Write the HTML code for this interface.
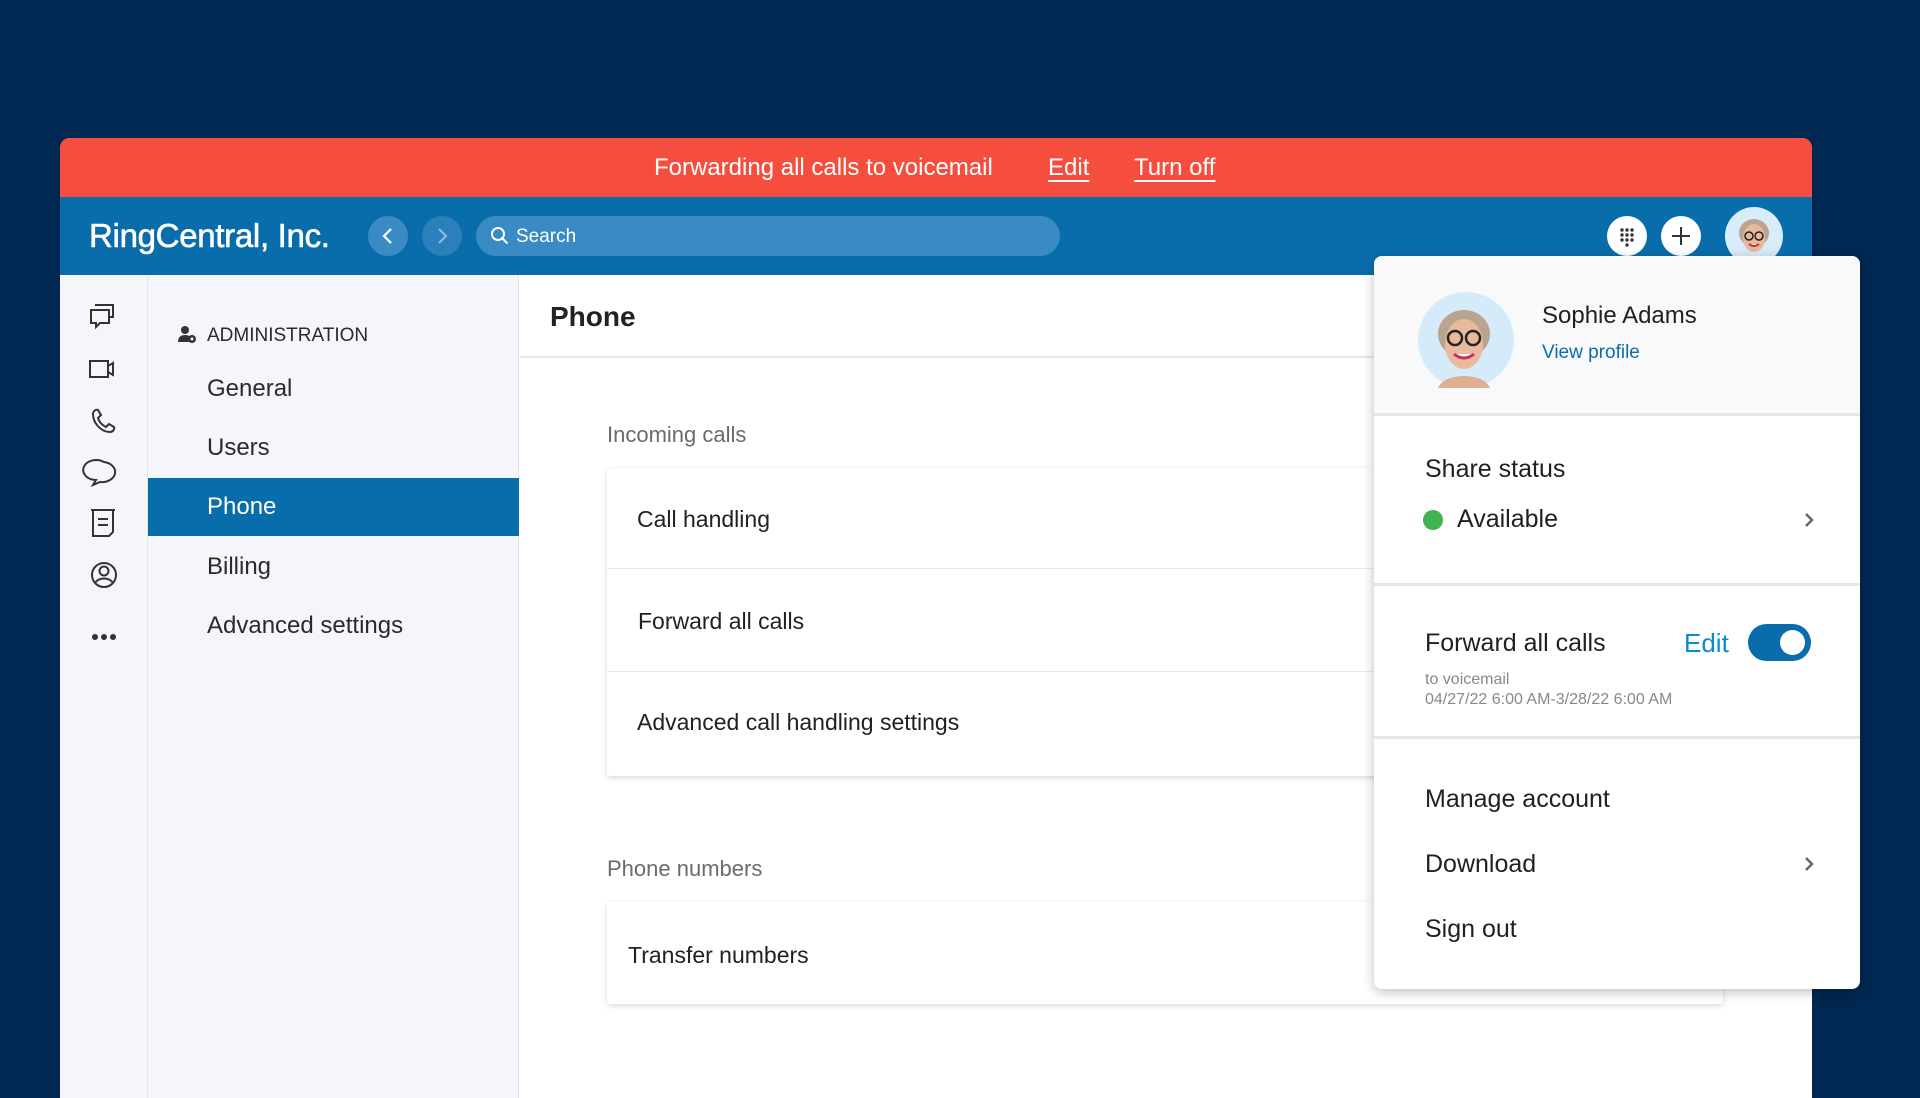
<!DOCTYPE html>
<html><head><meta charset="utf-8"><style>
*{margin:0;padding:0;box-sizing:border-box}
body{width:1920px;height:1080px;background:#012852;font-family:"Liberation Sans",sans-serif;position:relative;overflow:hidden;color:#202124}
.a{position:absolute}
.win{left:60px;top:138px;width:1752px;height:960px;background:#fff;border-radius:10px 10px 0 0;overflow:hidden}
.red{left:0;top:0;width:100%;height:59px;background:#f54e3f;color:#fff;font-size:24px}
.red span{position:absolute;top:16px}
.hdr{left:0;top:59px;width:100%;height:78px;background:#0a6dab}
.circ{border-radius:50%}
.t{white-space:nowrap;line-height:1}
.nav .t{font-size:24px;color:#2a2a2a;left:59px}
.card{background:#fff;box-shadow:0 2px 6px rgba(0,0,0,.15);border-radius:3px}
.dd{left:1374px;top:256px;width:486px;height:733px;background:#fff;border-radius:8px;box-shadow:0 3px 12px rgba(0,0,0,.25);overflow:hidden}
.hl{height:3px;background:#e6e6e6;left:0;width:100%}
</style></head><body>
<div class="a win">
  <div class="a red">
    <span style="left:594px">Forwarding all calls to voicemail</span>
    <span style="left:988px;text-decoration:underline;text-underline-offset:5px">Edit</span>
    <span style="left:1074px;text-decoration:underline;text-underline-offset:5px">Turn off</span>
  </div>
  <div class="a hdr">
    <div class="a t" style="left:29px;top:22px;color:#fff;font-size:33px;letter-spacing:-0.3px;-webkit-text-stroke:0.6px #fff">RingCentral, Inc.</div>
    <div class="a circ" style="left:308px;top:19px;width:40px;height:40px;background:#3a8bc4"><svg width="40" height="40"><path d="M23 13l-7 7 7 7" stroke="#fff" stroke-width="2.2" fill="none"/></svg></div>
    <div class="a circ" style="left:362px;top:19px;width:40px;height:40px;background:#2b7fba"><svg width="40" height="40"><path d="M17 13l7 7-7 7" stroke="#8fbde0" stroke-width="2" fill="none"/></svg></div>
    <div class="a" style="left:416px;top:19px;width:584px;height:40px;border-radius:20px;background:#3a8bc4">
      <svg class="a" style="left:14px;top:10px" width="20" height="20"><circle cx="8" cy="8" r="6" stroke="#fff" stroke-width="2" fill="none"/><path d="M12.5 12.5l5 5" stroke="#fff" stroke-width="2"/></svg>
      <div class="a t" style="left:40px;top:11px;color:#fff;font-size:19px">Search</div>
    </div>
    <div class="a circ" style="left:1547px;top:19px;width:40px;height:40px;background:#fff"><svg width="40" height="40" fill="#333"><circle cx="15" cy="14" r="1.7"/><circle cx="20" cy="14" r="1.7"/><circle cx="25" cy="14" r="1.7"/><circle cx="15" cy="19" r="1.7"/><circle cx="20" cy="19" r="1.7"/><circle cx="25" cy="19" r="1.7"/><circle cx="15" cy="24" r="1.7"/><circle cx="20" cy="24" r="1.7"/><circle cx="25" cy="24" r="1.7"/><circle cx="20" cy="29" r="1.7"/></svg></div>
    <div class="a circ" style="left:1601px;top:19px;width:40px;height:40px;background:#fff"><svg width="40" height="40"><path d="M20 11v18M11 20h18" stroke="#333" stroke-width="2"/></svg></div>
    <svg class="a" style="left:1664px;top:9px" width="60" height="60"><circle cx="30" cy="30" r="29" fill="#d9ecfa"/><ellipse cx="30" cy="27" rx="15" ry="14" fill="#b9a58f"/><ellipse cx="30" cy="32" rx="11" ry="14" fill="#e8b89a"/><path d="M14 60c4-10 28-10 32 0" fill="#e8b89a"/><circle cx="25" cy="30" r="4" fill="none" stroke="#222" stroke-width="1.5"/><circle cx="35" cy="30" r="4" fill="none" stroke="#222" stroke-width="1.5"/><path d="M25 38q5 4 10 0" stroke="#c03050" stroke-width="2" fill="#fff"/></svg>
  </div>
  <!-- rail -->
  <div class="a" style="left:0;top:137px;width:88px;height:830px;background:#f4f6fa;border-right:1px solid #e2e4e8">
    <svg width="88" height="560" fill="none" stroke="#333" stroke-width="2">
      <path d="M35 30h18v12h-3M31 35h18v13h-9l-4 4v-4h-5z"/>
      <rect x="30" y="86" width="18" height="16"/><path d="M48 91l5-3v12l-5-3"/>
      <path d="M33 139c0-3 3-5 5-4l3 5-3 3c1 4 4 7 8 9l3-3 5 3c1 2-1 5-4 5-9 0-17-9-17-18z"/>
      <path d="M44 187a13 10 0 1 0-8 18l-3 5 7-3a13 10 0 0 0 4-20z"/>
      <path d="M31 235h24M33 235v26h16l4-4v-22M38 244h10M38 250h10"/>
      <circle cx="44" cy="300" r="12"/><circle cx="44" cy="296" r="4.5"/><path d="M35 308c4-6 14-6 18 0"/>
    </svg>
    <svg class="a" style="left:31px;top:358px" width="26" height="8" fill="#333"><circle cx="4" cy="4" r="3"/><circle cx="13" cy="4" r="3"/><circle cx="22" cy="4" r="3"/></svg>
  </div>
  <!-- nav -->
  <div class="a nav" style="left:88px;top:137px;width:371px;height:830px;background:#f4f6fb;border-right:1px solid #e2e4e8">
    <svg class="a" style="left:30px;top:50px" width="20" height="20" fill="#333"><circle cx="7" cy="5" r="4"/><path d="M0 17c0-5 3-7 7-7 3 0 5 1 6 3v4z"/><circle cx="14" cy="14" r="4"/><circle cx="14" cy="14" r="1.5" fill="#f4f6fb"/></svg>
    <div class="a t" style="left:59px;top:51px;font-size:19px;color:#2a2a2a">ADMINISTRATION</div>
    <div class="a t" style="top:102px">General</div>
    <div class="a t" style="top:161px">Users</div>
    <div class="a" style="left:0;top:203px;width:371px;height:58px;background:#0a6dab"></div>
    <div class="a t" style="top:220px;color:#fff">Phone</div>
    <div class="a t" style="top:280px">Billing</div>
    <div class="a t" style="top:339px">Advanced settings</div>
  </div>
  <!-- main -->
  <div class="a t" style="left:490px;top:165px;font-size:28px;font-weight:bold;color:#222">Phone</div>
  <div class="a" style="left:460px;top:218px;width:1300px;height:2px;background:#e8e8e8"></div>
  <div class="a t" style="left:547px;top:286px;font-size:22px;color:#6b6b6b">Incoming calls</div>
  <div class="a card" style="left:547px;top:330px;width:1116px;height:308px">
    <div class="a t" style="left:30px;top:40px;font-size:23px">Call handling</div>
    <div class="a" style="left:0;top:100px;width:100%;height:1px;background:#e8e8e8"></div>
    <div class="a t" style="left:31px;top:142px;font-size:23px">Forward all calls</div>
    <div class="a" style="left:0;top:203px;width:100%;height:1px;background:#e8e8e8"></div>
    <div class="a t" style="left:30px;top:243px;font-size:23px">Advanced call handling settings</div>
  </div>
  <div class="a t" style="left:547px;top:720px;font-size:22px;color:#6b6b6b">Phone numbers</div>
  <div class="a card" style="left:547px;top:764px;width:1116px;height:102px">
    <div class="a t" style="left:21px;top:42px;font-size:23px">Transfer numbers</div>
  </div>
</div>
<!-- dropdown -->
<div class="a dd">
  <div class="a" style="left:0;top:0;width:100%;height:157px;background:#f9f9f9"></div>
  <svg class="a" style="left:44px;top:36px" width="96" height="96"><circle cx="48" cy="48" r="48" fill="#d6ebfa"/><ellipse cx="46" cy="42" rx="26" ry="24" fill="#b9a58f"/><ellipse cx="46" cy="52" rx="19" ry="25" fill="#e9b99b"/><path d="M20 96c6-16 46-16 52 0" fill="#e0ae90"/><circle cx="37" cy="46" r="7" fill="none" stroke="#222" stroke-width="2.5"/><circle cx="55" cy="46" r="7" fill="none" stroke="#222" stroke-width="2.5"/><path d="M36 62q10 8 20 0" stroke="#c83058" stroke-width="3" fill="#fff"/></svg>
  <div class="a t" style="left:168px;top:48px;font-size:24px">Sophie Adams</div>
  <div class="a t" style="left:168px;top:87px;font-size:19px;color:#0a6dab">View profile</div>
  <div class="a hl" style="top:157px"></div>
  <div class="a t" style="left:51px;top:201px;font-size:25px">Share status</div>
  <div class="a circ" style="left:49px;top:254px;width:20px;height:20px;background:#3fb34f"></div>
  <div class="a t" style="left:83px;top:251px;font-size:25px">Available</div>
  <svg class="a" style="left:429px;top:256px" width="12" height="16"><path d="M3 2l6 6-6 6" stroke="#666" stroke-width="2.5" fill="none"/></svg>
  <div class="a hl" style="top:327px"></div>
  <div class="a t" style="left:51px;top:375px;font-size:25px">Forward all calls</div>
  <div class="a t" style="left:310px;top:374px;font-size:26px;color:#0a8bd0">Edit</div>
  <div class="a" style="left:374px;top:368px;width:63px;height:37px;border-radius:19px;background:#0a6dab"><div class="a circ" style="left:32px;top:6px;width:25px;height:25px;background:#fff"></div></div>
  <div class="a t" style="left:51px;top:416px;font-size:16px;color:#888">to voicemail</div>
  <div class="a t" style="left:51px;top:436px;font-size:16px;color:#888">04/27/22 6:00 AM-3/28/22 6:00 AM</div>
  <div class="a hl" style="top:480px"></div>
  <div class="a t" style="left:51px;top:531px;font-size:25px">Manage account</div>
  <div class="a t" style="left:51px;top:596px;font-size:25px">Download</div>
  <svg class="a" style="left:429px;top:600px" width="12" height="16"><path d="M3 2l6 6-6 6" stroke="#666" stroke-width="2.5" fill="none"/></svg>
  <div class="a t" style="left:51px;top:661px;font-size:25px">Sign out</div>
</div>
</body></html>
